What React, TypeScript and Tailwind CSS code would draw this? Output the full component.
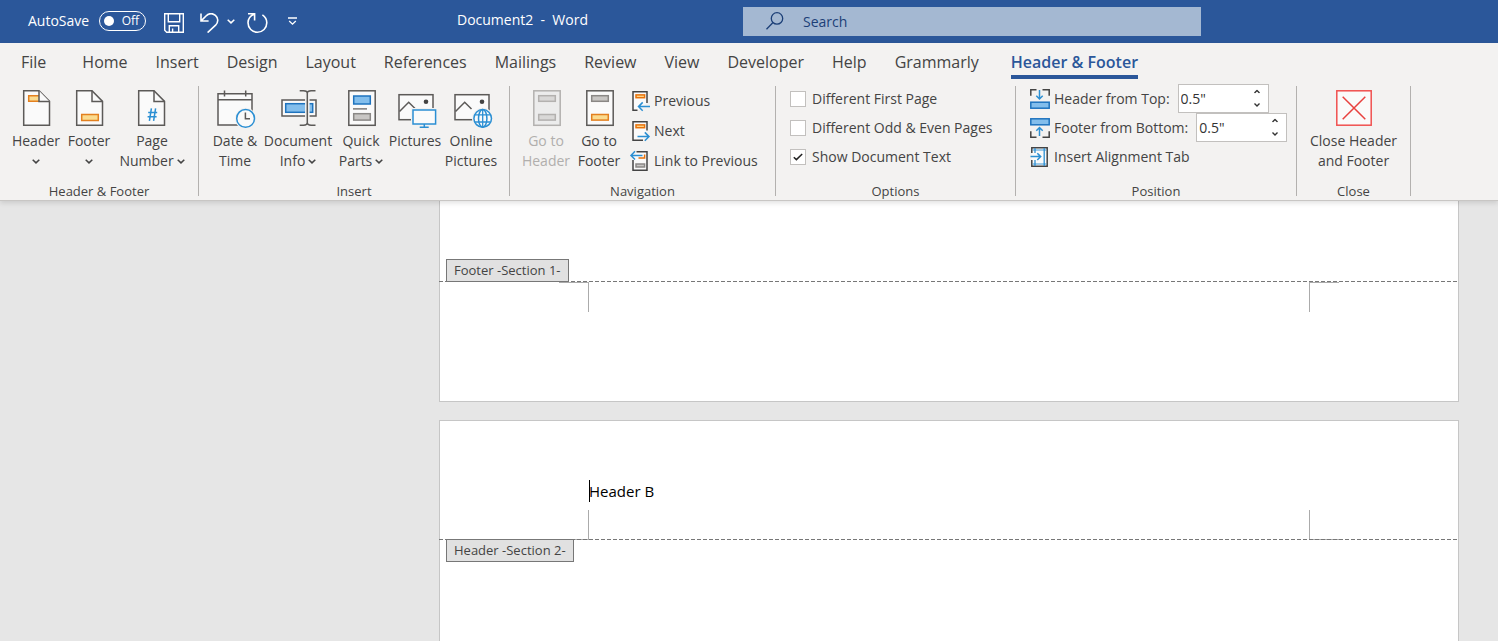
import type { ReactNode } from "react";

const DARK = "#5c5a58";
const PAPER = "#fafafa";
const BLUE = "#2b8fd3";
const BLUE_EDGE = "#1e73be";
const BLUE_FILL = "#83beec";
const ORANGE = "#e3801f";
const ORANGE_FILL = "#fadb8f";
const GRAY_EDGE = "#8a8886";
const GRAY_FILL = "#c8c6c4";

function Icon({ children, size = 36 }: { children: ReactNode; size?: number }) {
  return (
    <svg
      width={size}
      height={size}
      viewBox={`0 0 ${size} ${size}`}
      fill="none"
      stroke={DARK}
      strokeWidth={1.5}
      className="shrink-0 overflow-visible"
      aria-hidden="true"
    >
      {children}
    </svg>
  );
}

function Chevron() {
  return (
    <svg width="8" height="5" viewBox="0 0 8 5" fill="none" stroke="#444" strokeWidth="1.5" aria-hidden="true">
      <path d="M0.7 0.7 4 3.9 7.3 0.7" />
    </svg>
  );
}

function Bar({ y, h = 6, edge, fill }: { y: number; h?: number; edge: string; fill: string }) {
  return <rect x="10.7" y={y} width="16.6" height={h} stroke={edge} fill={fill} />;
}

const folded = "M5.7 0.8H21L31.5 11.4V35.3H5.7Z";

const HeaderIcon = () => (
  <Icon>
    <path d={folded} fill={PAPER} />
    <path d="M21 5.7H10.7V11.3H21" stroke={ORANGE} fill={ORANGE_FILL} />
    <path d="M21 0.8V11.4H31.5" fill={PAPER} />
  </Icon>
);

const FooterIcon = () => (
  <Icon>
    <path d={folded} fill={PAPER} />
    <path d="M21 0.8V11.4H31.5" />
    <Bar y={24.5} edge={ORANGE} fill={ORANGE_FILL} />
  </Icon>
);

const PageNumberIcon = () => (
  <Icon>
    <path d="M4.7 0.8H20L30.5 11.4V35.3H4.7Z" fill={PAPER} />
    <path d="M20 0.8V11.4H30.5" />
    <path d="M17.4 18.3 15.4 30.8M21.6 18.3 19.6 30.8M14.2 22.4H23.2M13.6 26.8H22.6" stroke={BLUE} />
  </Icon>
);

const DateIcon = () => (
  <Icon>
    <path d="M1 3.8H35V35H1Z" fill={PAPER} />
    <path d="M1 9.8H35M7.5 0.5V6.5M28.7 0.5V6.5" />
    <circle cx="28.6" cy="28.4" r="10.6" fill="#f3f2f1" stroke="none" />
    <circle cx="28.6" cy="28.4" r="8.9" fill={PAPER} stroke={BLUE} />
    <path d="M28.4 22.5V28.8H33" />
  </Icon>
);

const DocumentInfoIcon = () => (
  <Icon>
    <rect x="2" y="10" width="34" height="16" fill={PAPER} />
    <rect x="5.7" y="13.7" width="27" height="8.6" stroke={BLUE_EDGE} fill={BLUE_FILL} />
    <path d="M27.3 3V33" stroke="#f3f2f1" strokeWidth="4.5" />
    <path d="M19.7 0.8H23.5Q27.3 0.8 27.3 3.5Q27.3 0.8 31.1 0.8H35.5M19.7 35.2H23.5Q27.3 35.2 27.3 32.5Q27.3 35.2 31.1 35.2H35.5M27.3 3V33" />
  </Icon>
);

const QuickPartsIcon = () => (
  <Icon>
    <rect x="5.8" y="0.8" width="26.4" height="34.5" fill={PAPER} />
    <rect x="10.7" y="6" width="16.6" height="8" stroke={BLUE_EDGE} fill={BLUE_FILL} />
    <path d="M10 18.9H24" strokeWidth="1.2" />
    <Bar y={23.7} h={6.4} edge={GRAY_EDGE} fill={GRAY_FILL} />
  </Icon>
);

const Photo = () => (
  <>
    <rect x="2" y="4.7" width="34" height="25" fill={PAPER} />
    <path d="M2.5 21.5 11.7 12.3 18.5 19" />
    <circle cx="29" cy="11.7" r="2.3" fill="#444" stroke="none" />
  </>
);

const PicturesIcon = () => (
  <Icon>
    <Photo />
    <path d="M14 18H40.5V36H14Z" fill="#f3f2f1" stroke="none" />
    <rect x="16" y="20" width="22.6" height="14" fill={PAPER} stroke={BLUE} />
    <path d="M27.3 34V37.3M22.7 37.3H31.7" stroke={BLUE} />
  </Icon>
);

const OnlinePicturesIcon = () => (
  <Icon>
    <Photo />
    <circle cx="29.7" cy="28.4" r="10.7" fill="#f3f2f1" stroke="none" />
    <g stroke={BLUE}>
      <circle cx="29.7" cy="28.4" r="8.8" fill={PAPER} />
      <ellipse cx="29.7" cy="28.4" rx="4.2" ry="8.8" />
      <path d="M29.7 19.6V37.2M22 24.8H37.4M22 32H37.4" strokeWidth="1.3" />
    </g>
  </Icon>
);

const GoToHeaderIcon = () => (
  <Icon>
    <g stroke="#b3b1af">
      <rect x="5.8" y="0.8" width="26.4" height="34.5" fill="#ececec" />
      <Bar y={5.7} h={5.6} edge="#b3b1af" fill="#d9d8d7" />
      <Bar y={24.5} h={5.6} edge="#b3b1af" fill="#d9d8d7" />
    </g>
  </Icon>
);

const GoToFooterIcon = () => (
  <Icon>
    <rect x="5.8" y="0.8" width="26.4" height="34.5" fill={PAPER} />
    <Bar y={5.7} h={5.6} edge={GRAY_EDGE} fill={GRAY_FILL} />
    <Bar y={24.5} h={5.6} edge={ORANGE} fill={ORANGE_FILL} />
  </Icon>
);

const PreviousIcon = () => (
  <Icon size={20}>
    <path d="M17 12V0.8H3V19.2H7.5" fill={PAPER} stroke="#444" />
    <rect x="6" y="3.9" width="8.6" height="2.8" stroke="#e8710a" fill={ORANGE_FILL} />
    <path d="M20 15.6H8.5M12.7 11.4 8.5 15.6 12.7 19.8" stroke={BLUE} />
  </Icon>
);

const NextIcon = () => (
  <Icon size={20}>
    <path d="M17 9.5V0.8H3V19.2H13" fill={PAPER} stroke="#444" />
    <rect x="6" y="3.9" width="8.6" height="2.8" stroke="#e8710a" fill={ORANGE_FILL} />
    <path d="M7.5 15.6H19M14.8 11.4 19 15.6 14.8 19.8" stroke={BLUE} />
  </Icon>
);

const LinkIcon = () => (
  <Icon size={20}>
    <path d="M6.5 0.8H17V19.2H3V9" fill={PAPER} stroke="#444" />
    <path d="M14.6 3.5V7H8.5" stroke="#e8710a" />
    <rect x="6" y="13" width="8.6" height="3" stroke={GRAY_EDGE} fill={GRAY_FILL} />
    <path d="M12.5 4.4H1M5 0.3 1 4.4 5 8.5" stroke={BLUE} />
  </Icon>
);

const FromTopIcon = () => (
  <Icon size={20}>
    <path d="M0.8 6.7V0.8H6.5M12.5 0.8H19.2V6.7" stroke="#444" />
    <rect x="0.8" y="13.2" width="18.4" height="6" stroke={BLUE_EDGE} fill={BLUE_FILL} />
    <path d="M9.5 1V10M6.3 6.8 9.5 10 12.7 6.8" stroke={BLUE} />
  </Icon>
);

const FromBottomIcon = () => (
  <Icon size={20}>
    <path d="M0.8 13.3V19.2H6.5M12.5 19.2H19.2V13.3" stroke="#444" />
    <rect x="0.8" y="0.8" width="18.4" height="6" stroke={BLUE_EDGE} fill={BLUE_FILL} />
    <path d="M9.5 18V9.5M6.3 12.7 9.5 9.5 12.7 12.7" stroke={BLUE} />
  </Icon>
);

const AlignTabIcon = () => (
  <Icon size={20}>
    <path d="M1.8 6V0.8H17.2V19.2H1.8V13" fill={PAPER} stroke="#444" />
    <path d="M5 1V6M5 13V19M14.2 1V19" stroke={BLUE} strokeWidth="1.3" />
    <path d="M2.5 3H16.5M2.5 17H16.5" stroke={BLUE} strokeWidth="0.9" />
    <path d="M0.5 9.6H10.5M7.3 6.2 10.7 9.6 7.3 13" stroke={BLUE} />
  </Icon>
);

const CloseIcon = () => (
  <Icon>
    <rect x="0.8" y="0.8" width="34.4" height="34.4" fill={PAPER} stroke="#f0504f" />
    <path d="M6.7 6.7 29.3 29.3M29.3 6.7 6.7 29.3" stroke="#e8413f" />
  </Icon>
);

function BigButton({
  icon,
  lines,
  width,
  menu = false,
  disabled = false,
}: {
  icon: ReactNode;
  lines: string[];
  width: string;
  menu?: boolean;
  disabled?: boolean;
}) {
  return (
    <button type="button" disabled={disabled} className={`${width} flex shrink-0 flex-col items-center pt-[6px] disabled:text-[#b1afad]`}>
      {icon}
      <span className="mt-[5px] whitespace-nowrap">{lines[0]}</span>
      <span className="flex h-5 items-center gap-[3px] whitespace-nowrap">
        {lines[1]}
        {menu && <Chevron />}
      </span>
    </button>
  );
}

function Group({ title, width, children }: { title: string; width: string; children: ReactNode }) {
  return (
    <>
      <section aria-label={title} className={`${width} flex shrink-0 flex-col`}>
        <div className="flex h-[98px] items-start">{children}</div>
        <h2 className="text-center text-[13px] leading-[18px] text-[#444]">{title}</h2>
      </section>
      <div className="mt-[2px] h-[110px] w-px shrink-0 bg-[#b3b1af]" />
    </>
  );
}

function SmallButton({ icon, label }: { icon: ReactNode; label: string }) {
  return (
    <button type="button" className="flex h-[30px] items-center gap-1 whitespace-nowrap">
      {icon}
      {label}
    </button>
  );
}

function Option({ label, checked = false }: { label: string; checked?: boolean }) {
  return (
    <label className="flex h-[29px] items-center gap-1.5 whitespace-nowrap">
      <span className="grid size-4 place-items-center">
        <input
          type="checkbox"
          defaultChecked={checked}
          className="peer col-start-1 row-start-1 size-4 appearance-none border border-[#c2c0be] bg-white"
        />
        <svg
          viewBox="0 0 10 8"
          fill="none"
          stroke="#222"
          strokeWidth="1.5"
          className="pointer-events-none invisible col-start-1 row-start-1 h-2 w-2.5 peer-checked:visible"
          aria-hidden="true"
        >
          <path d="M0.8 4.2 3.4 6.6 9.2 1" />
        </svg>
      </span>
      {label}
    </label>
  );
}

function Spinner({ id, icon, label }: { id: string; icon: ReactNode; label: string }) {
  return (
    <div className="flex h-[29px] items-center whitespace-nowrap">
      {icon}
      <label htmlFor={id} className="ml-1">
        {label}
      </label>
      <div className="ml-2 flex h-[29px] w-[91px] border border-[#c2c0be] bg-white">
        <input id={id} defaultValue={'0.5"'} className="w-0 flex-1 bg-transparent pl-0.5 text-[#333] outline-none" />
        <div className="flex w-[22px] flex-col">
          <button type="button" aria-label="Increase" className="flex flex-1 rotate-180 items-center justify-center">
            <Caret />
          </button>
          <button type="button" aria-label="Decrease" className="flex flex-1 items-center justify-center">
            <Caret />
          </button>
        </div>
      </div>
    </div>
  );
}

function Caret() {
  return (
    <svg width="6" height="4" viewBox="0 0 6 4" fill="none" stroke="#333" strokeWidth="1.4" aria-hidden="true">
      <path d="M0.5 0.6 3 3 5.5 0.6" />
    </svg>
  );
}

const tabs = ["File", "Home", "Insert", "Design", "Layout", "References", "Mailings", "Review", "View", "Developer", "Help", "Grammarly"];

function TitleBar() {
  return (
    <header className="grid h-[43px] grid-cols-[457fr_286fr_458fr_297fr] bg-[#2b579a] text-sm text-white">
      <div className="flex items-center pb-0.5 pl-7">
        <span>AutoSave</span>
        <button
          type="button"
          role="switch"
          aria-checked="false"
          aria-label="AutoSave"
          className="ml-2.5 flex h-5 w-[47px] items-center justify-between rounded-full border border-white pr-1.5 pl-1 text-xs"
        >
          <span className="size-2.5 rounded-full bg-white" />
          Off
        </button>
        <button type="button" aria-label="Save" className="mt-1 ml-[18px]">
          <svg width="20" height="20" viewBox="0 0 20 20" fill="none" stroke="#fff" strokeWidth="1.4" aria-hidden="true">
            <path d="M0.7 0.7H19.3V19.3H2.7L0.7 17.3ZM4.3 0.7V8.7H15.7V0.7M5.3 19.3V12.7H14.7V19.3M8.6 19V15.6" />
          </svg>
        </button>
        <button type="button" aria-label="Undo" className="mt-1 ml-4">
          <svg width="19" height="20" viewBox="0 0 19 20" fill="none" stroke="#fff" strokeWidth="1.6" aria-hidden="true">
            <path d="M1 0.5V8H8.6M1.4 7.6 6 3C9.6 -0.4 13.2 0.6 15.4 2.4C18.4 5 18.6 9 15.6 12.2L7.6 19.6" />
          </svg>
        </button>
        <button type="button" aria-label="Undo history" className="mt-0.5 ml-2">
          <svg width="8" height="5" viewBox="0 0 8 5" fill="none" stroke="#fff" strokeWidth="1.5" aria-hidden="true">
            <path d="M0.7 0.7 4 3.9 7.3 0.7" />
          </svg>
        </button>
        <button type="button" aria-label="Redo" className="mt-1 ml-3">
          <svg width="21" height="20" viewBox="0 0 21 20" fill="none" stroke="#fff" strokeWidth="1.6" aria-hidden="true">
            <path d="M1 0.8H7.6V7.6M7.2 1.2C3.2 2.8 1 5.8 1 9.8C1 15 5.2 19.2 10.4 19.2S19.8 15 19.8 9.8C19.8 6.4 18.2 3.6 15.4 1.8" />
          </svg>
        </button>
        <button type="button" aria-label="Customize Quick Access Toolbar" className="mt-0.5 ml-5">
          <svg width="9" height="9" viewBox="0 0 9 9" fill="none" stroke="#fff" strokeWidth="1.3" aria-hidden="true">
            <path d="M0 1H9M1.2 4 4.5 7.2 7.8 4" />
          </svg>
        </button>
      </div>
      <h1 className="self-center pb-1 whitespace-pre">{"Document2  -  Word"}</h1>
      <label className="flex h-[29px] items-center self-center bg-[#a4b8d2] text-[#1c3f77]">
        <svg width="18" height="18" viewBox="0 0 18 18" fill="none" stroke="#1c3f77" strokeWidth="1.3" className="mr-[19px] mb-0.5 ml-[23px]" aria-hidden="true">
          <circle cx="11" cy="6.4" r="5.7" />
          <path d="M7 10.5 0.5 17.3" />
        </svg>
        <input type="search" aria-label="Search" placeholder="Search" className="flex-1 bg-transparent outline-none placeholder:text-[#1c3f77]" />
      </label>
    </header>
  );
}

function Ribbon() {
  return (
    <div className="relative z-10 border-b border-[#c8c6c4] bg-[#f3f2f1] text-[#444] shadow-[0_2px_5px_rgba(0,0,0,0.12)]">
      <nav className="flex h-[41px] items-start gap-7 pt-2 pl-[21px] text-base leading-[22px]">
        {tabs.map((tab, i) => (
          <button key={tab} type="button" className={i === 0 ? "mr-2" : ""}>
            {tab}
          </button>
        ))}
        <button type="button" aria-current="page" className="ml-1 border-b-4 border-[#2b579a] pb-0.5 font-semibold whitespace-nowrap text-[#2b579a]">
          Header &amp; Footer
        </button>
      </nav>
      <div className="flex h-[116px] text-sm leading-5">
        <Group title="Header & Footer" width="w-[198px]">
          <div className="flex gap-px pl-2.5">
            <BigButton icon={<HeaderIcon />} lines={["Header", ""]} width="w-[52px]" menu />
            <BigButton icon={<FooterIcon />} lines={["Footer", ""]} width="w-[52px]" menu />
            <BigButton icon={<PageNumberIcon />} lines={["Page", "Number"]} width="w-[72px]" menu />
          </div>
        </Group>
        <Group title="Insert" width="w-[310px]">
          <div className="flex pl-[9px]">
            <BigButton icon={<DateIcon />} lines={["Date &", "Time"]} width="w-[54px]" />
            <BigButton icon={<DocumentInfoIcon />} lines={["Document", "Info"]} width="w-[72px]" menu />
            <BigButton icon={<QuickPartsIcon />} lines={["Quick", "Parts"]} width="w-[54px]" menu />
            <BigButton icon={<PicturesIcon />} lines={["Pictures", ""]} width="w-[54px]" />
            <BigButton icon={<OnlinePicturesIcon />} lines={["Online", "Pictures"]} width="w-[58px]" />
          </div>
        </Group>
        <Group title="Navigation" width="w-[265px]">
          <div className="flex pl-[9px]">
            <BigButton icon={<GoToHeaderIcon />} lines={["Go to", "Header"]} width="w-[54px]" disabled />
            <BigButton icon={<GoToFooterIcon />} lines={["Go to", "Footer"]} width="w-[52px]" />
          </div>
          <div className="ml-[5px] flex flex-col pt-[2px]">
            <SmallButton icon={<PreviousIcon />} label="Previous" />
            <SmallButton icon={<NextIcon />} label="Next" />
            <SmallButton icon={<LinkIcon />} label="Link to Previous" />
          </div>
        </Group>
        <Group title="Options" width="w-[239px]">
          <div className="flex flex-col pl-3.5">
            <Option label="Different First Page" />
            <Option label="Different Odd & Even Pages" />
            <Option label="Show Document Text" checked />
          </div>
        </Group>
        <Group title="Position" width="w-[280px]">
          <div className="flex flex-col pl-3.5">
            <Spinner id="header-from-top" icon={<FromTopIcon />} label="Header from Top:" />
            <Spinner id="footer-from-bottom" icon={<FromBottomIcon />} label="Footer from Bottom:" />
            <button type="button" className="flex h-[29px] items-center gap-1 whitespace-nowrap">
              <AlignTabIcon />
              Insert Alignment Tab
            </button>
          </div>
        </Group>
        <Group title="Close" width="w-[113px]">
          <BigButton icon={<CloseIcon />} lines={["Close Header", "and Footer"]} width="w-full" />
        </Group>
      </div>
    </div>
  );
}

function DashedLine() {
  return <div className="relative -mx-px h-px bg-[repeating-linear-gradient(90deg,#777_0_4px,transparent_4px_6px)]" />;
}

function SectionTag({ text, edge }: { text: string; edge: string }) {
  return (
    <div className={`${edge} relative z-10 ml-1.5 h-[23px] w-fit border border-[#777] bg-[#e1e1e1] px-[7px] text-[13px] leading-[21px] text-[#444]`}>
      {text}
    </div>
  );
}

export default function App() {
  return (
    <div className="flex h-screen flex-col overflow-hidden bg-[#e6e6e6] font-['Open_Sans','Noto_Sans',sans-serif]">
      <TitleBar />
      <Ribbon />
      <main className="flex flex-1 flex-col gap-[18px] overflow-hidden pr-[39px] pl-[439px]">
        <article className="h-[201px] shrink-0 border border-t-0 border-[#c6c6c6] bg-white pt-[58px]">
          <SectionTag text="Footer -Section 1-" edge="-mb-px" />
          <DashedLine />
          <div className="flex justify-between px-[119px]">
            <div className="size-[30px] border-t border-r border-[#ababab]" />
            <div className="size-[30px] border-t border-l border-[#ababab]" />
          </div>
        </article>
        <article className="min-h-[221px] flex-1 border border-b-0 border-[#c6c6c6] bg-white pt-[59px]">
          <p className="flex h-[22px] items-center pl-[149px] text-[15px] text-black">
            <span className="-mr-px h-[22px] w-px bg-black" />
            Header B
          </p>
          <div className="mt-2 -mb-px flex justify-between px-[119px]">
            <div className="size-[30px] border-r border-b border-[#ababab]" />
            <div className="size-[30px] border-b border-l border-[#ababab]" />
          </div>
          <DashedLine />
          <SectionTag text="Header -Section 2-" edge="-mt-px" />
        </article>
      </main>
    </div>
  );
}
